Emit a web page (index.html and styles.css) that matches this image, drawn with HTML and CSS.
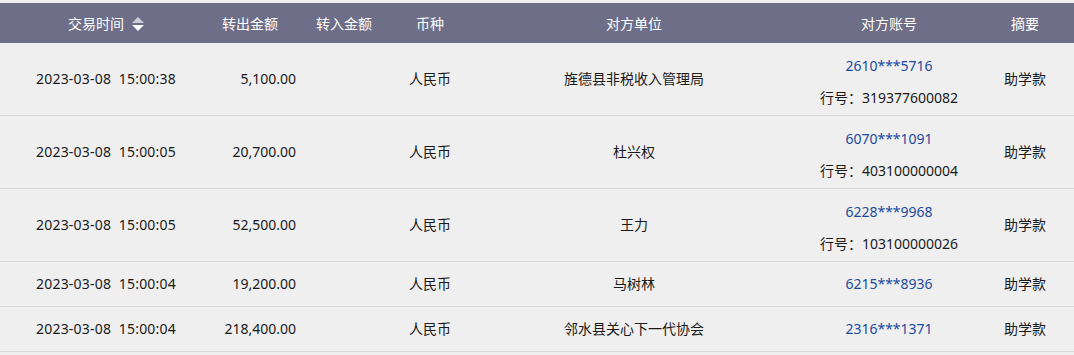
FILE: index.html
```html
<!DOCTYPE html>
<html lang="zh-CN">
<head>
<meta charset="utf-8">
<title>交易明细</title>
<link rel="stylesheet" href="styles.css">
</head>
<body>
<table class="grid">
  <colgroup>
    <col class="c-time"><col class="c-out"><col class="c-in"><col class="c-cur"><col class="c-unit"><col class="c-acct"><col class="c-memo">
  </colgroup>
  <thead>
    <tr>
      <th class="h-time"><span class="h-label">交易时间</span><svg class="sort" width="12" height="14" viewBox="0 0 12 14"><path d="M6 0 L12 6 L0 6 Z" fill="#cfcfdc"/><path d="M0 8 L12 8 L6 14 Z" fill="#ffffff"/></svg></th>
      <th class="h-out">转出金额</th>
      <th>转入金额</th>
      <th>币种</th>
      <th>对方单位</th>
      <th>对方账号</th>
      <th class="h-memo">摘要</th>
    </tr>
  </thead>
  <tbody>
    <tr class="tall">
      <td class="time">2023-03-08&nbsp;&nbsp;15:00:38</td>
      <td class="amt">5,100.00</td>
      <td></td>
      <td>人民币</td>
      <td>旌德县非税收入管理局</td>
      <td class="acct"><a class="acct-no" href="#">2610***5716</a><div class="bank">行号：319377600082</div></td>
      <td class="memo">助学款</td>
    </tr>
    <tr class="tall">
      <td class="time">2023-03-08&nbsp;&nbsp;15:00:05</td>
      <td class="amt">20,700.00</td>
      <td></td>
      <td>人民币</td>
      <td>杜兴权</td>
      <td class="acct"><a class="acct-no" href="#">6070***1091</a><div class="bank">行号：403100000004</div></td>
      <td class="memo">助学款</td>
    </tr>
    <tr class="tall">
      <td class="time">2023-03-08&nbsp;&nbsp;15:00:05</td>
      <td class="amt">52,500.00</td>
      <td></td>
      <td>人民币</td>
      <td>王力</td>
      <td class="acct"><a class="acct-no" href="#">6228***9968</a><div class="bank">行号：103100000026</div></td>
      <td class="memo">助学款</td>
    </tr>
    <tr class="short">
      <td class="time">2023-03-08&nbsp;&nbsp;15:00:04</td>
      <td class="amt">19,200.00</td>
      <td></td>
      <td>人民币</td>
      <td>马树林</td>
      <td class="acct"><a class="acct-no" href="#">6215***8936</a></td>
      <td class="memo">助学款</td>
    </tr>
    <tr class="short">
      <td class="time">2023-03-08&nbsp;&nbsp;15:00:04</td>
      <td class="amt">218,400.00</td>
      <td></td>
      <td>人民币</td>
      <td>邻水县关心下一代协会</td>
      <td class="acct"><a class="acct-no" href="#">2316***1371</a></td>
      <td class="memo">助学款</td>
    </tr>
  </tbody>
</table>
</body>
</html>
```

FILE: styles.css
```css
html, body {
  margin: 0;
  padding: 0;
  background: #efefef;
}
body {
  padding-top: 3px;
  font-family: "Noto Sans", "Noto Sans CJK SC", sans-serif;
  font-size: 14px;
  color: #1a1a1a;
}
.grid {
  width: 1074px;
  border-collapse: collapse;
  table-layout: fixed;
}
.c-time { width: 212px; }
.c-out { width: 92px; }
.c-in { width: 80px; }
.c-cur { width: 92px; }
.c-unit { width: 316px; }
.c-acct { width: 194px; }
.c-memo { width: 88px; }

thead th {
  height: 40px;
  padding: 0;
  background: #6e6e88;
  color: #ffffff;
  font-weight: normal;
  text-align: center;
  vertical-align: middle;
  white-space: nowrap;
}
.h-time .h-label { vertical-align: middle; }
.sort {
  vertical-align: middle;
  margin-left: 8px;
}
.h-out { padding-right: 16px; }
.h-memo { padding-right: 10px; }

tbody td {
  padding: 0;
  text-align: center;
  vertical-align: middle;
  border-bottom: 1px solid #dadada;
  white-space: nowrap;
  line-height: 20px;
}
tbody tr.tall td { height: 72px; }
tbody tr.short td { height: 44px; }
td.time { letter-spacing: 0.2px; }
td.amt { text-align: right; padding-right: 8px; }
td.memo { padding-right: 10px; }
.acct-no {
  display: block;
  color: #1c4aa0;
  text-decoration: none;
  line-height: 20px;
}
tr.tall .acct-no { margin-top: 6px; }
.bank {
  margin-top: 12px;
  line-height: 20px;
}
```
